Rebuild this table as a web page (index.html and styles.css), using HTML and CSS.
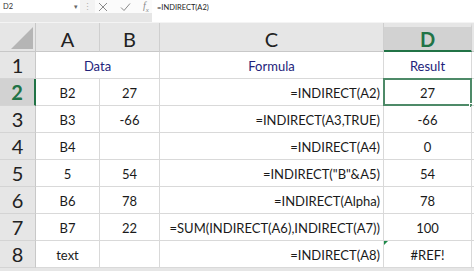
FILE: index.html
```html
<!DOCTYPE html>
<html>
<head>
<meta charset="utf-8">
<link rel="stylesheet" href="styles.css">
</head>
<body>
<div class="app">
  <div class="fbar">
    <div class="left">
      <div class="namebox"><span class="nb-text">D2</span><span class="nb-arrow">▾</span></div>
      <div class="band"></div>
    </div>
    <div class="sepdots">⋮</div>
    <div class="icons">
      <svg width="10" height="10" viewBox="0 0 10 10"><path d="M1 1L9 9M9 1L1 9" stroke="#8a8a8a" stroke-width="1"/></svg>
      <svg width="11" height="10" viewBox="0 0 11 10"><path d="M1 5.5L4 8.5L10 1.5" stroke="#8a8a8a" stroke-width="1" fill="none"/></svg>
      <span class="fx">f<sub>x</sub></span>
    </div>
    <div class="input">=INDIRECT(A2)</div>
  </div>
  <div class="grid">
    <div class="corner"><div class="tri"></div></div>
    <div class="ch">A</div>
    <div class="ch">B</div>
    <div class="ch">C</div>
    <div class="ch sel">D</div>
    <div class="ch end"></div>

    <div class="rh">1</div>
    <div class="c ctr hd span2">Data</div>
    <div class="c ctr hd">Formula</div>
    <div class="c ctr hd">Result</div>
    <div class="c end"></div>

    <div class="rh sel">2</div>
    <div class="c ctr">B2</div>
    <div class="c ctr">27</div>
    <div class="c rt">=INDIRECT(A2)</div>
    <div class="c ctr active">27<span class="handle"></span></div>
    <div class="c end"></div>

    <div class="rh">3</div>
    <div class="c ctr">B3</div>
    <div class="c ctr">-66</div>
    <div class="c rt">=INDIRECT(A3,TRUE)</div>
    <div class="c ctr">-66</div>
    <div class="c end"></div>

    <div class="rh">4</div>
    <div class="c ctr">B4</div>
    <div class="c ctr"></div>
    <div class="c rt">=INDIRECT(A4)</div>
    <div class="c ctr">0</div>
    <div class="c end"></div>

    <div class="rh">5</div>
    <div class="c ctr">5</div>
    <div class="c ctr">54</div>
    <div class="c rt">=INDIRECT("B"&amp;A5)</div>
    <div class="c ctr">54</div>
    <div class="c end"></div>

    <div class="rh">6</div>
    <div class="c ctr">B6</div>
    <div class="c ctr">78</div>
    <div class="c rt">=INDIRECT(Alpha)</div>
    <div class="c ctr">78</div>
    <div class="c end"></div>

    <div class="rh">7</div>
    <div class="c ctr">B7</div>
    <div class="c ctr">22</div>
    <div class="c rt">=SUM(INDIRECT(A6),INDIRECT(A7))</div>
    <div class="c ctr">100</div>
    <div class="c end"></div>

    <div class="rh">8</div>
    <div class="c ctr">text</div>
    <div class="c ctr"></div>
    <div class="c rt">=INDIRECT(A8)</div>
    <div class="c ctr err">#REF!<span class="tri-err"></span></div>
    <div class="c end"></div>
  </div>
</div>
</body>
</html>
```

FILE: styles.css
```css
* { box-sizing: border-box; }
html, body { margin: 0; padding: 0; }
body {
  width: 474px;
  height: 271px;
  overflow: hidden;
  background: #e6e6e6;
  font-family: Lato, "Liberation Sans", sans-serif;
}
.app { width: 474px; height: 271px; overflow: hidden; }

.fbar {
  display: flex;
  height: 23px;
  background: #e6e6e6;
  border-bottom: 1px solid #f4f4f4;
}
.left { width: 80px; display: flex; flex-direction: column; }
.namebox {
  height: 13px;
  background: #ffffff;
  display: flex;
  align-items: center;
  justify-content: space-between;
  padding: 0 2px 0 3px;
  font-size: 7.5px;
  color: #333;
}
.nb-arrow { font-size: 7px; color: #666; }
.band { flex: 1; }
.sepdots {
  width: 15px;
  height: 13px;
  background: #f3f3f3;
  font-size: 9px;
  color: #b0b0b0;
  display: flex;
  align-items: center;
  justify-content: center;
}
.icons {
  width: 57px;
  height: 13px;
  background: #fbfbfb;
  display: flex;
  align-items: center;
  gap: 12px;
  padding-left: 3px;
}
.fx {
  font-family: "Liberation Serif", serif;
  font-style: italic;
  font-size: 10px;
  color: #8a8a8a;
}
.fx sub { font-size: 7px; }
.input {
  flex: 1;
  background: #ffffff;
  font-size: 7.5px;
  color: #222;
  padding: 3px 0 0 5px;
  height: 22px;
}

.grid {
  display: grid;
  grid-template-columns: 36px 64px 60px 224px 88px 2px;
  grid-template-rows: 29px repeat(8, 27px);
  background: #ffffff;
}
.corner {
  background: #e6e6e6;
  border-right: 1px solid #c8c8c8;
  border-bottom: 1px solid #c8c8c8;
  position: relative;
}
.tri {
  position: absolute;
  right: 2px;
  bottom: 2px;
  width: 0; height: 0;
  border-left: 22px solid transparent;
  border-bottom: 22px solid #b5b5b5;
}
.ch {
  background: #e6e6e6;
  border-right: 1px solid #cfcfcf;
  border-bottom: 1px solid #c8c8c8;
  display: flex;
  align-items: center;
  justify-content: center;
  font-size: 20px;
  color: #222;
  padding-top: 3px;
}
.ch.sel {
  background: #d2d2d2;
  color: #217346;
  font-weight: bold;
  border-bottom: 2px solid #217346;
  border-top: 4px solid #e6e6e6;
  padding-top: 0;
}
.ch.end { background: #e6e6e6; border-right: none; }
.rh {
  background: #e6e6e6;
  border-right: 1px solid #c8c8c8;
  border-bottom: 1px solid #d4d4d4;
  display: flex;
  align-items: center;
  justify-content: center;
  font-size: 20px;
  color: #222;
}
.rh.sel {
  background: #d2d2d2;
  color: #217346;
  font-weight: bold;
  border-right: 2px solid #217346;
}
.c {
  border-right: 1px solid #d9d9d9;
  border-bottom: 1px solid #d9d9d9;
  display: flex;
  align-items: center;
  font-size: 13px;
  color: #1a1a1a;
  white-space: nowrap;
  padding-top: 2px;
  position: relative;
}
.span2 { grid-column: span 2; }
.c.end { border-right: none; background: #fff; }
.ctr { justify-content: center; }
.rt { justify-content: flex-end; padding-right: 3px; }
.hd { color: #22227a; }
.active {
  border: 2px solid #4e8a68;
  margin: -1px 0 0 -1px;
}
.handle {
  position: absolute;
  right: -4px;
  bottom: -4px;
  width: 5px;
  height: 5px;
  background: #4e8a68;
  border: 1px solid #fff;
}
.tri-err {
  position: absolute;
  left: 0;
  top: 0;
  width: 0; height: 0;
  border-top: 4px solid #1e8a4a;
  border-right: 4px solid transparent;
}
```
